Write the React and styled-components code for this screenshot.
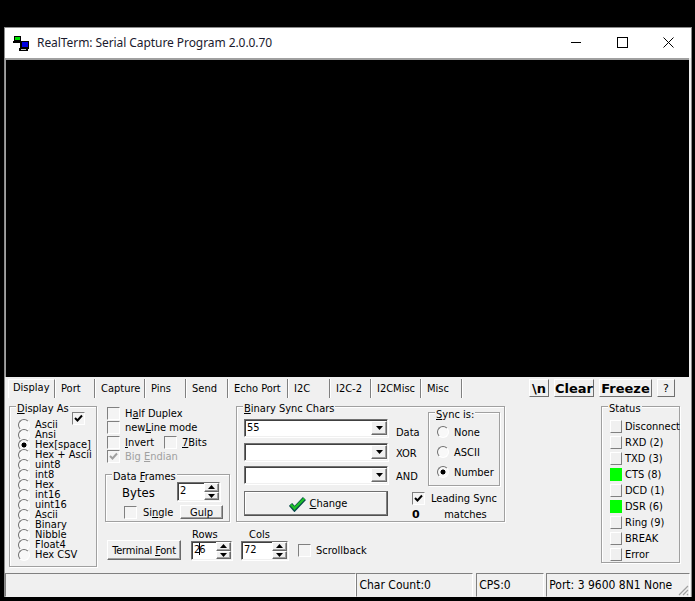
import styled, { createGlobalStyle } from "styled-components";

const tabs = [
  { name: "Display", width: 47, active: true },
  { name: "Port", width: 40 },
  { name: "Capture", width: 50 },
  { name: "Pins", width: 41 },
  { name: "Send", width: 42 },
  { name: "Echo Port", width: 60 },
  { name: "I2C", width: 42 },
  { name: "I2C-2", width: 41 },
  { name: "I2CMisc", width: 50 },
  { name: "Misc", width: 41 },
];
const displayModes = [
  "Ascii",
  "Ansi",
  "Hex[space]",
  "Hex + Ascii",
  "uint8",
  "int8",
  "Hex",
  "int16",
  "uint16",
  "Ascii",
  "Binary",
  "Nibble",
  "Float4",
  "Hex CSV",
];
const statusRows = [
  { name: "Disconnect" },
  { name: "RXD (2)" },
  { name: "TXD (3)" },
  { name: "CTS (8)", on: true },
  { name: "DCD (1)" },
  { name: "DSR (6)", on: true },
  { name: "Ring (9)" },
  { name: "BREAK" },
  { name: "Error" },
];

function AppIcon() {
  return (
    <svg width="16" height="16" viewBox="0 0 16 16">
      <rect x="1" y="1" width="7" height="5" fill="#000" />
      <rect x="2" y="2" width="5" height="3" fill="#00e000" />
      <rect x="0" y="6" width="8" height="2" fill="#000" />
      <rect x="7" y="6" width="9" height="8" fill="#000" />
      <rect x="9" y="7" width="6" height="5" fill="#0000e0" />
      <rect x="6" y="13" width="9" height="3" fill="#000" />
      <rect x="8" y="14" width="5" height="1" fill="#c0c0c0" />
    </svg>
  );
}

function CheckMark({ color = "#000" }) {
  return (
    <svg width="9" height="9" viewBox="0 0 9 9">
      <path d="M1 4 L3.5 6.5 L8 1.5" fill="none" stroke={color} strokeWidth="2" />
    </svg>
  );
}

function Check({ checked, disabled }) {
  return (
    <CheckBox>{checked && <CheckMark color={disabled ? "#a0a0a0" : "#000"} />}</CheckBox>
  );
}

function DownArrow() {
  return (
    <svg width="7" height="4" viewBox="0 0 7 4">
      <path d="M0 0 H7 L3.5 4 Z" fill="#000" />
    </svg>
  );
}

function Combo({ value }) {
  return (
    <ComboBox>
      <FieldText>{value}</FieldText>
      <ComboButton>
        <DownArrow />
      </ComboButton>
    </ComboBox>
  );
}

function Spin({ width, children }) {
  return (
    <SpinBox $width={width}>
      <FieldText>{children}</FieldText>
      <SpinButtons>
        <SpinButton>
          <svg width="7" height="4" viewBox="0 0 7 4">
            <path d="M3.5 0 L7 4 H0 Z" fill="#000" />
          </svg>
        </SpinButton>
        <SpinButton>
          <DownArrow />
        </SpinButton>
      </SpinButtons>
    </SpinBox>
  );
}

export default function App() {
  return (
    <>
      <GlobalStyle />
      <Window>
        <TitleBar>
          <TitleLeft>
            <AppIcon />
            <Title>RealTerm: Serial Capture Program 2.0.0.70</Title>
          </TitleLeft>
          <WindowButtons>
            <WindowButton>
              <svg width="11" height="11" viewBox="0 0 11 11">
                <path d="M0 5.5 H10" stroke="#000" fill="none" />
              </svg>
            </WindowButton>
            <WindowButton>
              <svg width="11" height="11" viewBox="0 0 11 11">
                <rect x="0.5" y="0.5" width="10" height="10" stroke="#000" fill="none" />
              </svg>
            </WindowButton>
            <WindowButton>
              <svg width="11" height="11" viewBox="0 0 11 11">
                <path d="M0.5 0.5 L10.5 10.5 M10.5 0.5 L0.5 10.5" stroke="#000" fill="none" />
              </svg>
            </WindowButton>
          </WindowButtons>
        </TitleBar>
        <Terminal />
        <ControlPanel>
          <TabStrip>
            <Tabs>
              {tabs.map((tab) => (
                <Tab key={tab.name} $width={tab.width} $active={tab.active}>
                  {tab.name}
                </Tab>
              ))}
            </Tabs>
            <Tools>
              <ToolButton $width={20}>\n</ToolButton>
              <ToolButton $width={40}>Clear</ToolButton>
              <ToolButton $width={53}>Freeze</ToolButton>
              <HelpButton>?</HelpButton>
            </Tools>
          </TabStrip>
          <TabBody>
            <DisplayGroup>
              <Legend>
                <u>D</u>isplay As
              </Legend>
              <DisplayCheck>
                <Check checked />
              </DisplayCheck>
              <ModeList>
                {displayModes.map((mode, i) => (
                  <ModeRow key={i}>
                    <Radio $on={mode === "Hex[space]"} />
                    {mode}
                  </ModeRow>
                ))}
              </ModeList>
            </DisplayGroup>
            <Middle>
              <LeftColumn>
                <CheckList>
                  <CheckRow>
                    <Check />
                    <span>
                      H<u>a</u>lf Duplex
                    </span>
                  </CheckRow>
                  <CheckRow>
                    <Check />
                    <span>
                      new<u>L</u>ine mode
                    </span>
                  </CheckRow>
                  <CheckRow>
                    <Check />
                    <InvertLabel>
                      <u>I</u>nvert
                    </InvertLabel>
                    <Check />
                    <span>
                      <u>7</u>Bits
                    </span>
                  </CheckRow>
                  <CheckRow $disabled>
                    <Check checked disabled />
                    <span>
                      Big <u>E</u>ndian
                    </span>
                  </CheckRow>
                </CheckList>
                <FramesGroup>
                  <Legend>
                    Data <u>F</u>rames
                  </Legend>
                  <BytesRow>
                    <BytesLabel>Bytes</BytesLabel>
                    <Spin width={43}>2</Spin>
                  </BytesRow>
                  <SingleRow>
                    <Check />
                    <SingleLabel>
                      Si<u>n</u>gle
                    </SingleLabel>
                    <GulpButton>Gulp</GulpButton>
                  </SingleRow>
                </FramesGroup>
              </LeftColumn>
              <BinaryGroup>
                <Legend>
                  <u>B</u>inary Sync Chars
                </Legend>
                <BinaryTop>
                  <ComboList>
                    <ComboRow>
                      <Combo value="55" />
                      <ComboLabel $drop={8}>Data</ComboLabel>
                    </ComboRow>
                    <ComboRow>
                      <Combo />
                      <ComboLabel $drop={4}>XOR</ComboLabel>
                    </ComboRow>
                    <ComboRow>
                      <Combo />
                      <ComboLabel $drop={2}>AND</ComboLabel>
                    </ComboRow>
                  </ComboList>
                  <SyncGroup>
                    <Legend>
                      <u>S</u>ync is:
                    </Legend>
                    <SyncRow>
                      <Radio />
                      None
                    </SyncRow>
                    <SyncRow>
                      <Radio />
                      ASCII
                    </SyncRow>
                    <SyncRow>
                      <Radio $on />
                      Number
                    </SyncRow>
                  </SyncGroup>
                </BinaryTop>
                <BinaryBottom>
                  <ChangeButton>
                    <svg width="17" height="16" viewBox="0 0 17 16">
                      <path d="M1.5 8.5 L5.5 13 L15.5 2.5" fill="none" stroke="#064a4a" strokeWidth="4.4" />
                      <path d="M1.8 8.5 L5.5 12.4 L15.2 2.5" fill="none" stroke="#1fc02a" strokeWidth="2.4" />
                    </svg>
                    <span>
                      <u>C</u>hange
                    </span>
                  </ChangeButton>
                  <LeadingBlock>
                    <Check checked />
                    <span>Leading Sync</span>
                    <MatchCount>0</MatchCount>
                    <MatchText>matches</MatchText>
                  </LeadingBlock>
                </BinaryBottom>
              </BinaryGroup>
              <BottomRow>
                <FontButton>
                  <span>
                    Terminal <u>F</u>ont
                  </span>
                </FontButton>
                <SizeField>
                  <SizeLabel $indent={1}>Rows</SizeLabel>
                  <Spin width={41}>
                    2<Caret />6
                  </Spin>
                </SizeField>
                <SizeField>
                  <SizeLabel $indent={8}>Cols</SizeLabel>
                  <Spin width={47}>72</Spin>
                </SizeField>
                <ScrollRow>
                  <Check />
                  <span>Scrollback</span>
                </ScrollRow>
              </BottomRow>
            </Middle>
            <StatusGroup>
              <Legend>Status</Legend>
              {statusRows.map((row) => (
                <StatusRow key={row.name}>
                  <Led $on={row.on} />
                  {row.name}
                </StatusRow>
              ))}
            </StatusGroup>
          </TabBody>
        </ControlPanel>
        <StatusBar>
          <StatusCell $width={352} $gap={0} />
          <StatusCell $width={117} $gap={0}>
            Char Count:0
          </StatusCell>
          <StatusCell $width={68} $gap={3}>
            CPS:0
          </StatusCell>
          <StatusCell $width={144} $gap={2}>
            Port: 3 9600 8N1 None
            <Grip>
              <svg width="12" height="12" viewBox="0 0 12 12">
                <path d="M11 2 L2 11 M11 6 L6 11 M11 10 L10 11" stroke="#a0a0a0" strokeWidth="1.2" fill="none" />
              </svg>
            </Grip>
          </StatusCell>
        </StatusBar>
      </Window>
    </>
  );
}

const GlobalStyle = createGlobalStyle`
  html, body {
    margin: 0;
    height: 100%;
    background: #000;
    overflow: hidden;
  }
  * {
    box-sizing: border-box;
  }
  u {
    text-decoration: underline;
    text-underline-offset: 1px;
  }
`;
const Window = styled.div`
  margin: 27px 0 0 4px;
  width: 688px;
  height: 570px;
  display: flex;
  flex-direction: column;
  background: #f0f0f0;
  border: 1px solid #8c8c8c;
  border-bottom: 0;
  font-family: "DejaVu Sans Condensed", "DejaVu Sans", sans-serif;
  font-stretch: condensed;
  font-size: 11px;
  color: #000;
`;
const TitleBar = styled.div`
  height: 30px;
  flex: none;
  display: flex;
  align-items: center;
  justify-content: space-between;
  background: #fff;
  padding: 0 0 1px 8px;
`;
const TitleLeft = styled.div`
  display: flex;
  align-items: center;
  gap: 8px;
`;
const Title = styled.span`
  font-family: "Noto Sans", "Open Sans", sans-serif;
  font-size: 12px;
  letter-spacing: -0.07px;
  color: #1a1a2e;
`;
const WindowButtons = styled.div`
  display: flex;
`;
const WindowButton = styled.div`
  width: 46px;
  height: 29px;
  display: flex;
  align-items: center;
  justify-content: center;
`;
const Terminal = styled.div`
  height: 319px;
  flex: none;
  background: #000;
  margin: 0 2px 0 0;
  border-top: 2px solid #a0a0a0;
  border-left: 1px solid #a0a0a0;
`;
const ControlPanel = styled.div`
  flex: 1;
  display: flex;
  flex-direction: column;
  min-height: 0;
`;
const TabStrip = styled.div`
  height: 21px;
  flex: none;
  display: flex;
  justify-content: space-between;
  padding: 2px 16px 0 3px;
`;
const Tabs = styled.div`
  display: flex;
  height: 19px;
`;
const Tab = styled.div`
  width: ${(p) => p.$width}px;
  padding-left: ${(p) => (p.$active ? 4 : 6)}px;
  padding-top: ${(p) => (p.$active ? 1 : 3)}px;
  white-space: nowrap;
  border-right: 1px solid #808080;
  box-shadow: 1px 0 0 #fff;
  ${(p) => p.$active && "border-top: 1px solid #fff; border-left: 1px solid #fff;"}
`;
const Tools = styled.div`
  display: flex;
  gap: 5px;
  height: 18px;
`;
const ToolButton = styled.div`
  width: ${(p) => p.$width}px;
  display: flex;
  align-items: center;
  justify-content: center;
  font-family: "DejaVu Sans", sans-serif;
  font-stretch: normal;
  font-weight: 700;
  font-size: 13px;
  border: 1px solid;
  border-color: #fff #707070 #707070 #fff;
  white-space: nowrap;
`;
const HelpButton = styled(ToolButton)`
  width: 18px;
  font-weight: 400;
  font-size: 11px;
`;
const TabBody = styled.div`
  flex: 1;
  display: flex;
  align-items: flex-start;
  padding: 8px 0 0 4px;
`;
const Group = styled.div`
  position: relative;
  border: 1px solid #a0a0a0;
  box-shadow: 1px 1px 0 #fff, inset 1px 1px 0 #fff;
`;
const Legend = styled.span`
  position: absolute;
  top: -5px;
  left: 6px;
  padding: 0 1px;
  background: #f0f0f0;
  line-height: 13px;
  white-space: nowrap;
`;
const DisplayGroup = styled(Group)`
  width: 88px;
  height: 161px;
  flex: none;
`;
const DisplayCheck = styled.div`
  position: absolute;
  top: 5px;
  left: 62px;
`;
const ModeList = styled.div`
  display: grid;
  grid-auto-rows: 10px;
  padding: 13px 0 0 8px;
`;
const ModeRow = styled.div`
  display: flex;
  align-items: center;
  gap: 5px;
  white-space: nowrap;
  line-height: 10px;
`;
const Radio = styled.span`
  width: 12px;
  height: 12px;
  flex: none;
  border-radius: 50%;
  border: 1px solid;
  border-color: #707070 #fff #fff #707070;
  background: ${(p) =>
    p.$on ? "radial-gradient(circle, #000 0 2.2px, #f8f8f8 2.8px)" : "#f8f8f8"};
`;
const CheckBox = styled.span`
  width: 13px;
  height: 13px;
  flex: none;
  display: inline-flex;
  align-items: center;
  justify-content: center;
  border: 1px solid;
  border-color: #808080 #fff #fff #808080;
  background: #f4f4f4;
`;
const Middle = styled.div`
  width: 400px;
  margin-left: 8px;
  flex: none;
  display: grid;
  grid-template-columns: 125px 269px;
  column-gap: 6px;
`;
const LeftColumn = styled.div`
  display: flex;
  flex-direction: column;
`;
const CheckList = styled.div`
  display: grid;
  grid-auto-rows: 14.5px;
  padding-left: 2px;
`;
const CheckRow = styled.div`
  display: flex;
  align-items: center;
  gap: 5px;
  white-space: nowrap;
  color: ${(p) => (p.$disabled ? "#a0a0a0" : "inherit")};
`;
const InvertLabel = styled.span`
  width: 34px;
`;
const FramesGroup = styled(Group)`
  height: 48px;
  margin-top: 10px;
  padding: 7px 0 0 16px;
`;
const BytesRow = styled.div`
  display: flex;
  align-items: center;
`;
const BytesLabel = styled.span`
  width: 55px;
  font-size: 13px;
  padding-top: 1px;
`;
const SingleRow = styled.div`
  display: flex;
  align-items: center;
  margin-top: 4px;
  padding-left: 2px;
`;
const SingleLabel = styled.span`
  margin-left: 6px;
  width: 37px;
`;
const Raised = styled.div`
  display: flex;
  align-items: center;
  justify-content: center;
  background: #f0f0f0;
  border: 1px solid;
  border-color: #fff #6a6a6a #6a6a6a #fff;
  box-shadow: inset -1px -1px 0 #a0a0a0;
  white-space: nowrap;
`;
const GulpButton = styled(Raised)`
  width: 43px;
  height: 14px;
`;
const SunkenField = styled.div`
  display: flex;
  align-items: stretch;
  background: #fff;
  border: 1px solid;
  border-color: #707070 #f0f0f0 #f0f0f0 #707070;
  box-shadow: inset 1px 1px 0 #404040, 1px 1px 0 #fff;
`;
const SpinBox = styled(SunkenField)`
  width: ${(p) => p.$width}px;
  height: 19px;
`;
const ComboBox = styled(SunkenField)`
  width: 144px;
  height: 18px;
  flex: none;
`;
const FieldText = styled.div`
  flex: 1;
  padding: 1px 0 0 2px;
  line-height: 13px;
`;
const ComboButton = styled(Raised)`
  width: 16px;
  margin: 1px 0;
`;
const SpinButtons = styled.div`
  width: 15px;
  display: flex;
  flex-direction: column;
`;
const SpinButton = styled(Raised)`
  flex: 1;
`;
const Caret = styled.span`
  display: inline-block;
  width: 1px;
  height: 12px;
  margin: 0 -1px 0 -1px;
  vertical-align: -2px;
  background: #000;
`;
const BinaryGroup = styled(Group)`
  height: 116px;
  padding: 5px 0 0 7px;
`;
const BinaryTop = styled.div`
  display: flex;
  align-items: flex-start;
`;
const ComboList = styled.div`
  width: 184px;
  margin-top: 7px;
  display: grid;
  grid-auto-rows: 18px;
  row-gap: 5.5px;
`;
const ComboRow = styled.div`
  display: flex;
  align-items: center;
  gap: 8px;
`;
const ComboLabel = styled.span`
  padding-top: ${(p) => p.$drop}px;
`;
const SyncGroup = styled(Group)`
  width: 72px;
  height: 74px;
  padding: 9px 0 0 8px;
`;
const SyncRow = styled.div`
  height: 20px;
  display: flex;
  align-items: center;
  gap: 5px;
`;
const BinaryBottom = styled.div`
  display: flex;
  margin-top: 5px;
`;
const ChangeButton = styled(Raised)`
  width: 144px;
  height: 25px;
  gap: 4px;
  padding-left: 4px;
  border-color: #707070 #505050 #505050 #707070;
  box-shadow: inset -1px -1px 0 #808080, inset 1px 1px 0 #fff;
`;
const LeadingBlock = styled.div`
  margin: -1px 0 0 24px;
  width: 88px;
  display: grid;
  grid-template-columns: 19px 1fr;
  grid-auto-rows: 16px;
  align-items: center;
  white-space: nowrap;
`;
const MatchCount = styled.b`
  font-family: "DejaVu Sans", sans-serif;
  font-stretch: normal;
  font-size: 11px;
`;
const MatchText = styled.span`
  text-align: center;
`;
const BottomRow = styled.div`
  grid-column: 1 / -1;
  display: flex;
  align-items: flex-end;
  margin-top: 5px;
  padding-left: 2px;
`;
const FontButton = styled(Raised)`
  width: 74px;
  height: 20px;
  margin-right: 10px;
  letter-spacing: -0.2px;
`;
const SizeField = styled.div`
  display: flex;
  flex-direction: column;
  margin-right: 9px;
`;
const SizeLabel = styled.span`
  line-height: 13px;
  padding-top: 1px;
  margin-left: ${(p) => p.$indent}px;
`;
const ScrollRow = styled.div`
  height: 20px;
  display: flex;
  align-items: center;
  gap: 5px;
  margin-left: 1px;
`;
const StatusGroup = styled(Group)`
  width: 79px;
  height: 157px;
  margin-left: 96px;
  padding: 11px 0 0 8px;
  flex: none;
`;
const StatusRow = styled.div`
  height: 16px;
  display: flex;
  align-items: center;
  gap: 3px;
  white-space: nowrap;
`;
const Led = styled.span`
  width: 12px;
  height: 13px;
  flex: none;
  background: ${(p) => (p.$on ? "#00ff00" : "#f0f0f0")};
  border: 1px solid;
  border-color: ${(p) =>
    p.$on ? "#00ff00" : "#fff #808080 #808080 #fff"};
`;
const StatusBar = styled.div`
  height: 24px;
  flex: none;
  display: flex;
  padding-right: 1px;
`;
const StatusCell = styled.div`
  position: relative;
  width: ${(p) => p.$width}px;
  margin-left: ${(p) => p.$gap}px;
  padding: 2px 0 0 2px;
  border: 1px solid;
  border-color: #808080 #fff transparent #808080;
  white-space: nowrap;
  font-size: 12px;
  line-height: 18px;
`;
const Grip = styled.span`
  position: absolute;
  right: 0;
  bottom: 0;
  line-height: 0;
`;
